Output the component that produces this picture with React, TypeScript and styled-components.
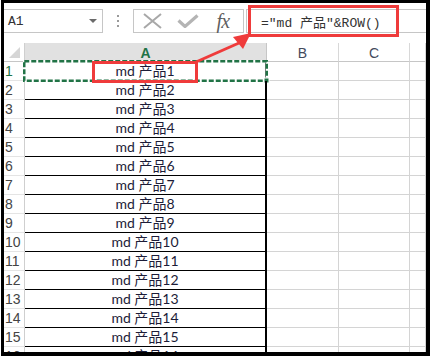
import React from 'react';
import styled, { createGlobalStyle } from 'styled-components';

const Global = createGlobalStyle`
  html, body { margin: 0; padding: 0; background: #fff; }
  body { font-family: "Liberation Sans", Arial, sans-serif; }
`;

const Page = styled.div`
  position: relative;
  width: 432px;
  height: 356px;
  overflow: hidden;
  background: #fff;
`;

const Frame = styled.div`
  margin-left: 1px;
  width: 429px;
  height: 356px;
  box-sizing: border-box;
  border-style: solid;
  border-color: #000;
  border-width: 3px 4px 4px 3px;
  overflow: hidden;
  display: flex;
  flex-direction: column;
`;

const Toolbar = styled.div`
  display: flex;
  margin-top: 6px;
  height: 24px;
  flex-shrink: 0;
`;

const mono = `"Liberation Mono", "Noto Sans CJK SC", monospace`;

const NameBox = styled.div`
  width: 99px;
  box-sizing: border-box;
  border: 1px solid #c6c6c6;
  border-left: none;
  display: flex;
  align-items: center;
  justify-content: space-between;
  padding: 0 5px 0 4px;
  font-family: ${mono};
  font-size: 13px;
  color: #333;
`;

const DropArrow = styled.span`
  width: 0;
  height: 0;
  border-left: 4px solid transparent;
  border-right: 4px solid transparent;
  border-top: 4px solid #6a6a6a;
`;

const Grip = styled.div`
  width: 30px;
  display: flex;
  align-items: center;
  justify-content: center;
`;

const FxBox = styled.div`
  width: 111px;
  box-sizing: border-box;
  border: 1px solid #c6c6c6;
  display: grid;
  grid-template-columns: repeat(3, 1fr);
  align-items: center;
  justify-items: center;
`;

const FxLabel = styled.span`
  font-family: "Liberation Serif", "DejaVu Serif", serif;
  font-style: italic;
  font-size: 20px;
  color: #5f5f5f;
  line-height: 1;
  letter-spacing: -1px;
  margin-right: 4px;
`;

const FormulaInput = styled.div`
  flex: 1;
  margin-left: 2px;
  border-top: 1px solid #c6c6c6;
  border-bottom: 1px solid #c6c6c6;
  border-left: 1px solid #c6c6c6;
  display: flex;
  align-items: center;
  padding-left: 14px;
  font-family: ${mono};
  font-size: 13px;
  color: #333;
  white-space: pre;
`;

const Sheet = styled.div`
  margin-top: 10px;
  display: grid;
  grid-template-columns: 21px 242px 72px 71px 1fr;
  grid-auto-rows: 19px;
`;

const Corner = styled.div`
  box-sizing: border-box;
  border-right: 1px solid #cfcfcf;
  border-bottom: 1px solid #c6c6c6;
  display: flex;
  align-items: flex-end;
  justify-content: flex-end;
  padding: 0 4px 3px 0;
`;

const ColHeader = styled.div<{ $selected?: boolean }>`
  box-sizing: border-box;
  background: ${(p) => (p.$selected ? '#e1e1e1' : '#fff')};
  border-right: 1px solid ${(p) => (p.$selected ? '#c6c6c6' : '#d8d8d8')};
  border-bottom: 1px solid #c6c6c6;
  display: flex;
  align-items: center;
  justify-content: center;
  font-family: "Liberation Sans", Arial, sans-serif;
  font-size: 14px;
  font-weight: ${(p) => (p.$selected ? 700 : 400)};
  color: ${(p) => (p.$selected ? '#217346' : '#444a5c')};
  padding-top: 2px;
`;

const RowHeader = styled.div<{ $selected?: boolean }>`
  box-sizing: border-box;
  border-right: 1px solid #cfcfcf;
  border-bottom: 1px solid #e4e4e4;
  display: flex;
  align-items: flex-end;
  padding: 0 0 1px 1px;
  font-family: "Liberation Sans", Arial, sans-serif;
  font-size: 14px;
  line-height: 16px;
  color: ${(p) => (p.$selected ? '#217346' : '#444')};
`;

const DataCell = styled.div`
  position: relative;
  box-sizing: border-box;
  border-right: 2px solid #000;
  border-bottom: 1px solid #000;
  display: flex;
  align-items: flex-end;
  justify-content: center;
  padding-bottom: 1px;
  font-family: "Lato", "Noto Sans CJK SC", sans-serif;
  font-size: 14px;
  line-height: 17px;
  color: #1c1c38;
  white-space: pre;
`;

const EmptyCell = styled.div`
  box-sizing: border-box;
  border-right: 1px solid #d4d4d4;
  border-bottom: 1px solid #d4d4d4;
`;

const Selection = styled.svg`
  position: absolute;
  left: -2px;
  top: -2px;
  pointer-events: none;
  overflow: visible;
`;

const RedBox = styled.div`
  position: absolute;
  box-sizing: border-box;
  border: 3px solid #ef3b3b;
  pointer-events: none;
`;

const Overlay = styled.svg`
  position: absolute;
  left: 0;
  top: 0;
  pointer-events: none;
`;

const rows = Array.from({ length: 16 }, (_, i) => i + 1);

function Marquee() {
  const w = 245;
  const h = 22;
  return (
    <Selection width={w} height={h} viewBox={`0 0 ${w} ${h}`}>
      <rect x="1.25" y="1.25" width={w - 2.5} height={h - 2.5} fill="none" stroke="#fff" strokeWidth="2.5" />
      <rect
        x="1.25"
        y="1.25"
        width={w - 2.5}
        height={h - 2.5}
        fill="none"
        stroke="#217346"
        strokeWidth="2.5"
        strokeDasharray="5 2"
      />
      <rect x={w - 4} y={h - 4} width="5" height="5" fill="#217346" stroke="#fff" strokeWidth="1" />
    </Selection>
  );
}

export default function App() {
  return (
    <>
      <Global />
      <Page>
        <Frame>
          <Toolbar>
            <NameBox>
              <span>A1</span>
              <DropArrow />
            </NameBox>
            <Grip>
              <svg width="4" height="14" viewBox="0 0 4 14">
                <rect x="1" y="1" width="2" height="2" fill="#9a9a9a" />
                <rect x="1" y="6" width="2" height="2" fill="#9a9a9a" />
                <rect x="1" y="11" width="2" height="2" fill="#9a9a9a" />
              </svg>
            </Grip>
            <FxBox>
              <svg width="19" height="16" viewBox="0 0 19 16">
                <path d="M1 1 L18 15 M18 1 L1 15" stroke="#a8a8a8" strokeWidth="2" fill="none" />
              </svg>
              <svg width="22" height="14" viewBox="0 0 22 14">
                <path d="M1.5 6.5 L8 12.5 L20.5 1.5" stroke="#b4b4b4" strokeWidth="3.2" fill="none" />
              </svg>
              <FxLabel>fx</FxLabel>
            </FxBox>
            <FormulaInput>=″md 产品″&amp;ROW()</FormulaInput>
          </Toolbar>
          <Sheet>
            <Corner>
              <svg width="11" height="11" viewBox="0 0 11 11">
                <polygon points="11,0 11,11 0,11" fill="#d6d6d6" />
              </svg>
            </Corner>
            <ColHeader $selected>A</ColHeader>
            <ColHeader>B</ColHeader>
            <ColHeader>C</ColHeader>
            <ColHeader />
            {rows.map((n) => (
              <React.Fragment key={n}>
                <RowHeader $selected={n === 1}>{n}</RowHeader>
                <DataCell>
                  {`md 产品${n}`}
                  {n === 1 && <Marquee />}
                </DataCell>
                <EmptyCell />
                <EmptyCell />
                <EmptyCell />
              </React.Fragment>
            ))}
          </Sheet>
        </Frame>
        <RedBox style={{ left: 248, top: 5, width: 151, height: 32 }} />
        <RedBox style={{ left: 92, top: 61, width: 106, height: 22 }} />
        <Overlay width="432" height="356" viewBox="0 0 432 356">
          <line x1="196" y1="62" x2="239" y2="43" stroke="#ef3b3b" strokeWidth="3" />
          <polygon points="251,33 233,37 243,49" fill="#ef3b3b" />
        </Overlay>
      </Page>
    </>
  );
}
